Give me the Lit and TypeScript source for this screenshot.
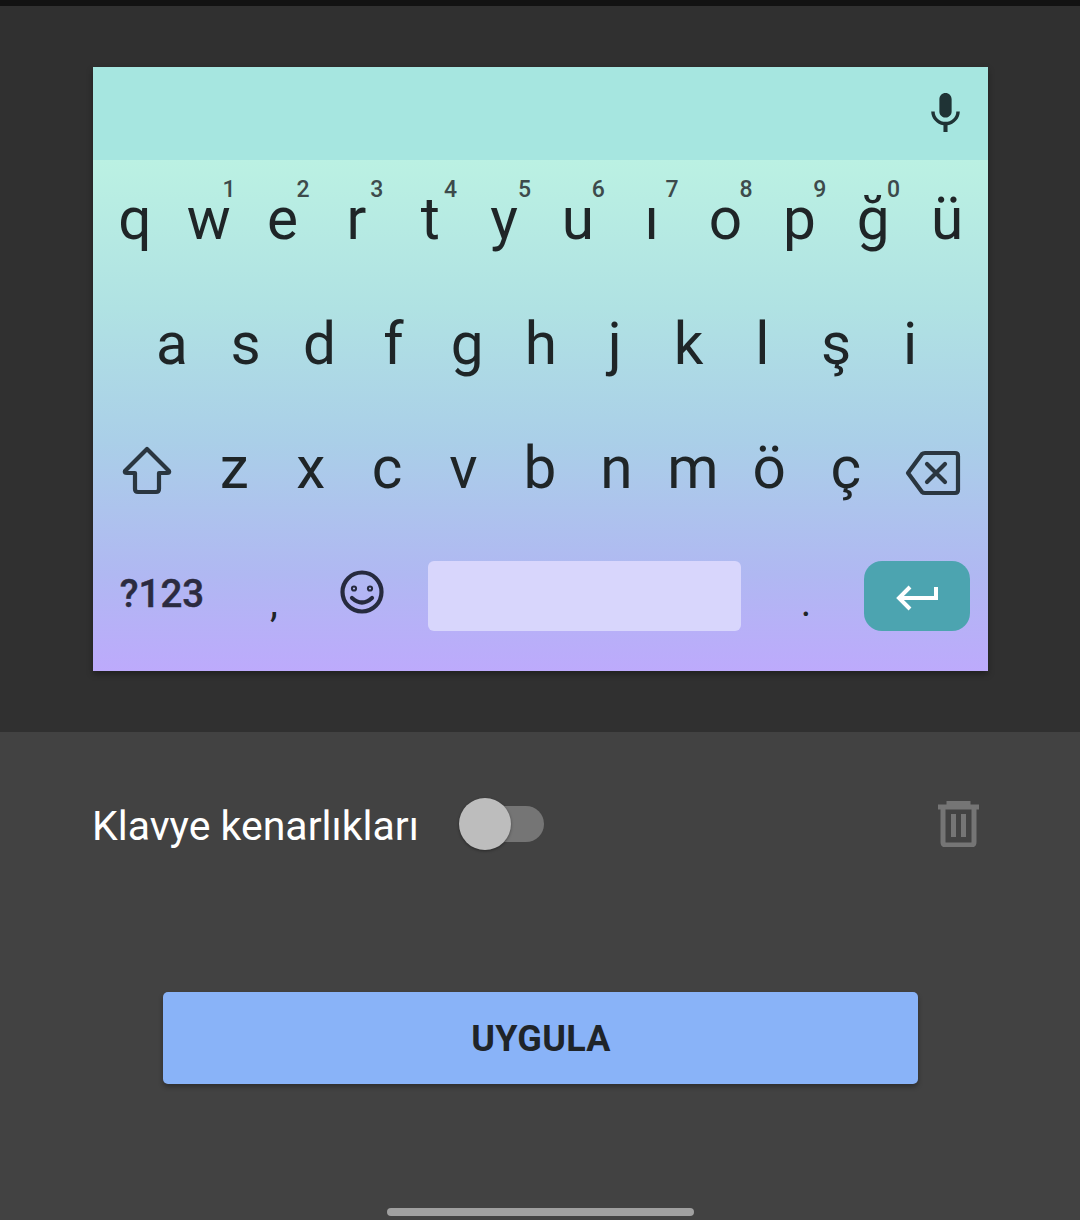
import { LitElement, html, css, svg } from 'lit'
import { customElement } from 'lit/decorators.js'

const TOP_ROW = [
    ['q', ''], ['w', '1'], ['e', '2'], ['r', '3'], ['t', '4'], ['y', '5'],
    ['u', '6'], ['ı', '7'], ['o', '8'], ['p', '9'], ['ğ', '0'], ['ü', '']
]
const MIDDLE_ROW = ['a', 's', 'd', 'f', 'g', 'h', 'j', 'k', 'l', 'ş', 'i']
const BOTTOM_ROW = ['z', 'x', 'c', 'v', 'b', 'n', 'm', 'ö', 'ç']

const micIcon = svg`<path d="M12 14c1.66 0 3-1.34 3-3V5c0-1.66-1.34-3-3-3S9 3.34 9 5v6c0 1.66 1.34 3 3 3zm5.3-3c0 3-2.54 5.1-5.3 5.1S6.7 14 6.7 11H5c0 3.41 2.72 6.23 6 6.72V21h2v-3.28c3.28-.48 6-3.3 6-6.72h-1.7z"/>`

@customElement('app-root')
export class AppRoot extends LitElement {
    static styles = css`
        :host {
            display: flex;
            flex-direction: column;
            width: 1080px;
            height: 1220px;
            overflow: hidden;
            background: #424242;
            font-family: Roboto, 'Noto Sans', sans-serif;
        }

        .status {
            height: 6px;
            background: #121212;
        }

        .preview {
            height: 726px;
            box-sizing: border-box;
            padding: 61px 92px 0 93px;
            background: #303030;
        }

        .keyboard {
            height: 604px;
            display: flex;
            flex-direction: column;
            background: linear-gradient(180deg, #bbf1e3 15.4%, #b0e2e3 40%, #aacfe8 62%, #b0b8f2 84%, #bdaafc 100%);
            box-shadow: 0 3px 6px rgba(0, 0, 0, 0.35);
        }

        .strip {
            height: 93px;
            display: flex;
            align-items: center;
            justify-content: flex-end;
            padding-right: 18px;
            background: #a6e6e0;
        }

        .strip svg {
            width: 49px;
            height: 49px;
            fill: #1f3335;
        }

        .keys {
            flex: 1;
            padding: 0 4px 13px 5px;
            display: flex;
            flex-direction: column;
        }

        .row {
            height: 124.5px;
            display: flex;
        }

        .row.indent {
            padding: 0 37px;
        }

        .key {
            position: relative;
            flex: 1;
            display: flex;
            align-items: center;
            justify-content: center;
            font-size: 58.5px;
            color: #1f2527;
        }

        .letter {
            padding-bottom: 6px;
            box-sizing: border-box;
        }

        .hint {
            position: absolute;
            top: 17px;
            right: 10px;
            font-size: 23px;
            font-weight: 500;
            line-height: 26px;
            color: #3d4a4b;
        }

        .shift,
        .delete {
            flex: none;
            width: 98px;
        }

        .delete {
            width: 100px;
        }

        .key svg {
            fill: none;
            stroke: #2a3640;
            stroke-width: 4.2;
            stroke-linejoin: round;
            stroke-linecap: round;
        }

        .shift svg {
            width: 52px;
            height: 50px;
        }

        .delete svg {
            width: 58px;
            height: 46px;
            margin: 3px 0 0 1px;
        }

        .last {
            display: grid;
            grid-template-columns: 128px 96px 80px 1fr 78px 139px;
        }

        .symbols {
            font-size: 38.5px;
            font-weight: 500;
            color: #2b2b40;
            padding-bottom: 5px;
            -webkit-text-stroke: 0.4px #2b2b40;
        }

        .punct {
            font-size: 40px;
            padding-top: 14px;
        }

        .emoji {
            padding-bottom: 7px;
        }

        .emoji svg {
            width: 48px;
            height: 48px;
            stroke: #262a3e;
        }

        .space-wrap {
            padding: 27px 26px;
            display: flex;
        }

        .space {
            flex: 1;
            height: 70px;
            border-radius: 6px;
            background: #d8d6fc;
        }

        .enter-wrap {
            padding: 27px 14px 27px 19px;
            display: flex;
        }

        .enter {
            flex: 1;
            height: 70px;
            border-radius: 18px;
            display: flex;
            align-items: center;
            justify-content: center;
            background: #4ca4b0;
        }

        .enter svg {
            width: 44px;
            height: 28px;
            margin: 5px 0 0 0;
            fill: none;
            stroke: #fff;
            stroke-width: 4;
        }

        .panel {
            flex: 1;
            display: flex;
            flex-direction: column;
            padding-top: 66px;
        }

        .option {
            height: 52px;
            display: flex;
            align-items: center;
            padding: 0 101px 0 92px;
        }

        .label {
            font-size: 41px;
            color: #fff;
            padding-top: 3px;
        }

        .toggle {
            position: relative;
            width: 84px;
            height: 36px;
            margin-left: 41px;
            border-radius: 18px;
            background: #757575;
        }

        .thumb {
            position: absolute;
            left: -1px;
            top: -8px;
            width: 52px;
            height: 52px;
            border-radius: 50%;
            background: #bdbdbd;
            box-shadow: 0 1px 3px rgba(0, 0, 0, 0.4);
        }

        .trash {
            width: 41px;
            height: 46px;
            margin-left: auto;
            fill: none;
            stroke: #757575;
            stroke-width: 5;
        }

        .apply {
            align-self: center;
            box-sizing: border-box;
            width: 755px;
            height: 92px;
            padding: 2px 0 0 2px;
            margin-top: 142px;
            display: flex;
            align-items: center;
            justify-content: center;
            border-radius: 5px;
            background: #89b3f8;
            box-shadow: 0 3px 5px rgba(0, 0, 0, 0.3);
            font-size: 36px;
            font-weight: 700;
            letter-spacing: 0.3px;
            color: #1f2429;
        }

        .handle {
            align-self: center;
            width: 307px;
            height: 8px;
            margin-top: 124px;
            border-radius: 4px;
            background: #a0a0a0;
        }
    `

    renderKey(label: string, hint = '') {
        return html`<div class="key letter">${label}${hint ? html`<span class="hint">${hint}</span>` : ''}</div>`
    }

    render() {
        return html`
            <div class="status"></div>
            <div class="preview">
                <div class="keyboard">
                    <div class="strip">
                        <svg viewBox="0 0 24 24">${micIcon}</svg>
                    </div>
                    <div class="keys">
                        <div class="row">${TOP_ROW.map(([k, h]) => this.renderKey(k, h))}</div>
                        <div class="row indent">${MIDDLE_ROW.map((k) => this.renderKey(k))}</div>
                        <div class="row">
                            <div class="key shift">
                                <svg viewBox="0 0 52 50">
                                    <path d="M26 3 L4 25 Q3 27 6 27 H14 V43 Q14 46 17 46 H35 Q38 46 38 43 V27 H46 Q49 27 48 25 Z" />
                                </svg>
                            </div>
                            ${BOTTOM_ROW.map((k) => this.renderKey(k))}
                            <div class="key delete">
                                <svg viewBox="0 0 58 46">
                                    <path d="M3 23 L17 4 Q18 3 20 3 H50 Q53 3 53 6 V40 Q53 43 50 43 H20 Q18 43 17 42 Z" />
                                    <path d="M22 14 L40 32 M40 14 L22 32" />
                                </svg>
                            </div>
                        </div>
                        <div class="row last">
                            <div class="key symbols">?123</div>
                            <div class="key punct">,</div>
                            <div class="key emoji">
                                <svg viewBox="0 0 48 48">
                                    <circle cx="24" cy="24" r="19.5" />
                                    <path d="M14 30 Q24 39 34 30" />
                                    <circle cx="16" cy="20.5" r="1" />
                                    <circle cx="32" cy="20.5" r="1" />
                                </svg>
                            </div>
                            <div class="space-wrap"><div class="space"></div></div>
                            <div class="key punct">.</div>
                            <div class="enter-wrap">
                                <div class="enter">
                                    <svg viewBox="0 0 44 28">
                                        <path d="M41 3 V14 H5 M15 3 L4 14 L15 25" />
                                    </svg>
                                </div>
                            </div>
                        </div>
                    </div>
                </div>
            </div>
            <div class="panel">
                <div class="option">
                    <span class="label">Klavye kenarlıkları</span>
                    <div class="toggle"><div class="thumb"></div></div>
                    <svg class="trash" viewBox="0 0 41 46">
                        <path d="M0 6 H41 M11 6 V2 H30 V6" />
                        <path d="M5 6 V41 Q5 44 8 44 H33 Q36 44 36 41 V6" />
                        <path d="M15.5 13 V36 M25.5 13 V36" />
                    </svg>
                </div>
                <div class="apply">UYGULA</div>
                <div class="handle"></div>
            </div>
        `
    }
}
